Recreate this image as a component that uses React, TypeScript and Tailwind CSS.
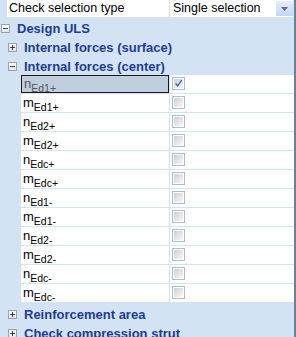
import React from 'react';

const rows = [
  { m: 'n', sub: 'Ed1+', checked: true },
  { m: 'm', sub: 'Ed1+' },
  { m: 'n', sub: 'Ed2+' },
  { m: 'm', sub: 'Ed2+' },
  { m: 'n', sub: 'Edc+' },
  { m: 'm', sub: 'Edc+' },
  { m: 'n', sub: 'Ed1-' },
  { m: 'm', sub: 'Ed1-' },
  { m: 'n', sub: 'Ed2-' },
  { m: 'm', sub: 'Ed2-' },
  { m: 'n', sub: 'Edc-' },
  { m: 'm', sub: 'Edc-' },
];

const Toggle = ({ open }: { open?: boolean }) => (
  <div className="w-[9px] h-[9px] border border-[#98a3b0] bg-gradient-to-b from-white to-[#e2e6ec] flex items-center justify-center relative">
    <div className="w-[5px] h-px bg-[#404040]" />
    {!open && <div className="absolute w-px h-[5px] bg-[#404040]" />}
  </div>
);

const Group = ({ label, open, level }: { label: string; open?: boolean; level: number }) => (
  <div className={`flex items-center h-[19px] pt-[2px] ${level === 0 ? 'pl-[1px]' : 'pl-[8px]'}`}>
    <Toggle open={open} />
    <span className="ml-[7px] text-[13px] font-bold text-[#1f3d8e] leading-none">{label}</span>
  </div>
);

const Check = ({ checked }: { checked?: boolean }) => (
  <div className="w-[13px] h-[13px] border border-[#a7bcd8] p-px bg-white">
    <div className="w-full h-full bg-gradient-to-br from-[#cfcfcf] to-[#f8f8f8] flex items-center justify-center">
      {checked && (
        <svg width="11" height="11" viewBox="0 0 11 11">
          <path d="M2 5.5 L4.5 8.5 L9.5 1.5" stroke="#3f63a8" strokeWidth="1.6" fill="none" />
        </svg>
      )}
    </div>
  </div>
);

export default function App() {
  return (
    <div className="w-[296px] h-[337px] bg-[#d4e3f3] overflow-hidden relative" style={{ fontFamily: '"Liberation Sans", Arial, sans-serif' }}>
      <div className="absolute right-0 top-0 w-[2px] h-full bg-[#6f7f98]" />
      <div className="flex h-[17px] ml-[7px] mr-[3px] bg-white">
        <div className="w-[162px] flex items-center pl-[2px] text-[12.5px] text-black">Check selection type</div>
        <div className="w-px bg-[#d4e3f3]" />
        <div className="flex-1 flex items-center pl-[3px] text-[12.5px] text-black">Single selection</div>
        <div className="w-[17px] my-[1px] bg-gradient-to-b from-[#e6eefa] to-[#c4d7f1] flex items-center justify-center">
          <svg width="7" height="4" viewBox="0 0 7 4"><path d="M0 0 H7 L3.5 4 Z" fill="#5a6e8c" /></svg>
        </div>
      </div>
      <div className="h-px" />
      <Group label="Design ULS" open level={0} />
      <Group label="Internal forces (surface)" level={1} />
      <Group label="Internal forces (center)" open level={1} />
      <div className="ml-[21px] mr-[2px] flex flex-col gap-px">
        {rows.map((r, i) => (
          <div key={i} className="flex h-[18px]">
            <div className={`w-[148px] flex items-start pl-[2px] ${r.checked ? 'bg-[#c0cedd] border border-[#1a1a1a] text-[#555]' : 'bg-white text-black'}`}>
              <span className={`text-[13px] leading-none ${r.checked ? 'mt-[1px]' : 'mt-[2px]'}`}>
                {r.m}
                <span className="text-[10.5px] relative top-[4px]">{r.sub}</span>
              </span>
            </div>
            <div className="w-px" />
            <div className="flex-1 bg-white pl-[2px] pt-[2px]">
              <Check checked={r.checked} />
            </div>
          </div>
        ))}
      </div>
      <div className="h-[2px]" />
      <Group label="Reinforcement area" level={1} />
      <Group label="Check compression strut" level={1} />
    </div>
  );
}
